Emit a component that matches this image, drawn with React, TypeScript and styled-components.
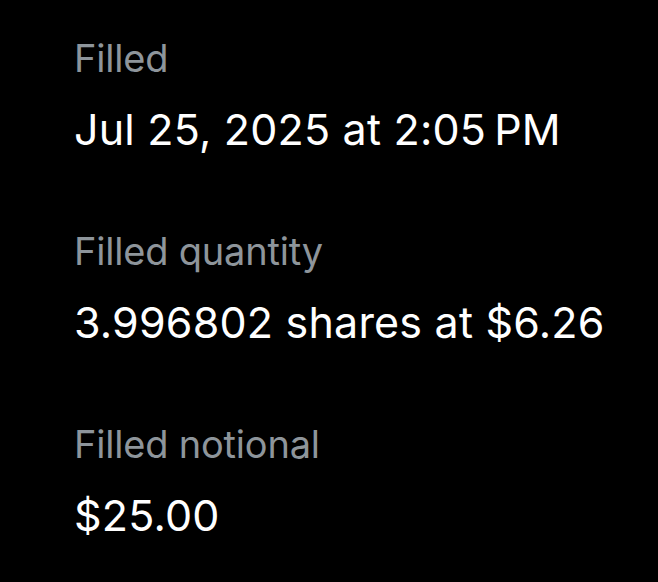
import styled, { createGlobalStyle } from "styled-components";

const GlobalStyle = createGlobalStyle`
  html, body {
    margin: 0;
    padding: 0;
    background: #000;
  }
  body {
    font-family: Inter, "Liberation Sans", sans-serif;
    -webkit-font-smoothing: antialiased;
  }
`;

const Page = styled.div`
  width: 658px;
  height: 582px;
  background: #000;
  padding: 36px 0 0 74px;
  box-sizing: border-box;
  display: flex;
  flex-direction: column;
  gap: 75px;
`;

const Field = styled.div`
  display: flex;
  flex-direction: column;
  gap: 24px;
`;

const Label = styled.div`
  color: #8e959b;
  font-size: 38px;
  line-height: 44px;
  letter-spacing: -0.2px;
`;

const Value = styled.div`
  color: #fff;
  font-size: 43px;
  line-height: 50px;
  letter-spacing: 0.2px;
`;

const fields = [
  { label: "Filled", value: "Jul 25, 2025 at 2:05\u2009PM" },
  { label: "Filled quantity", value: "3.996802 shares at $6.26" },
  { label: "Filled notional", value: "$25.00" },
];

export default function App() {
  return (
    <>
      <GlobalStyle />
      <Page>
        {fields.map((f) => (
          <Field key={f.label}>
            <Label>{f.label}</Label>
            <Value>{f.value}</Value>
          </Field>
        ))}
      </Page>
    </>
  );
}
